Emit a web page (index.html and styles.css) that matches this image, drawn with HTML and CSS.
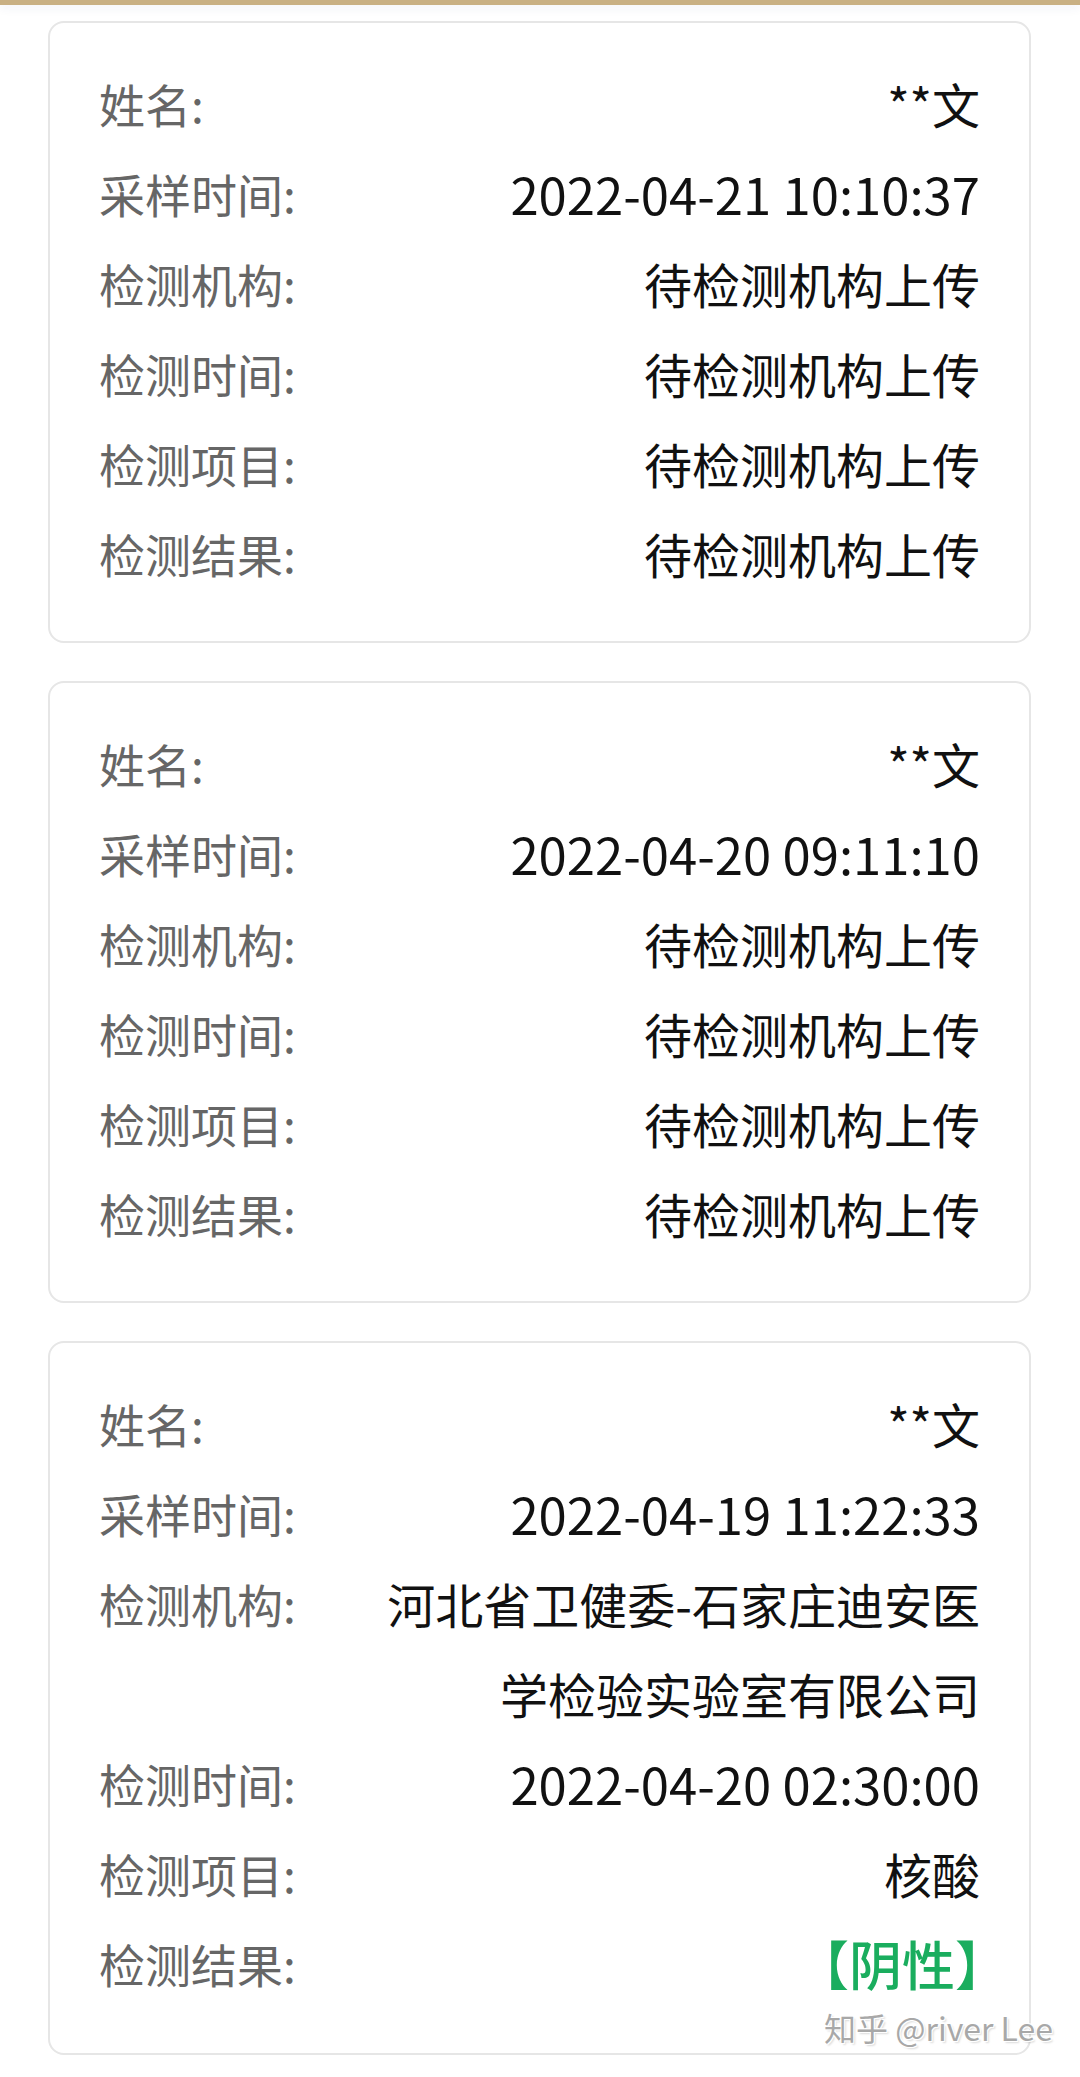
FILE: index.html
```html
<!DOCTYPE html>
<html lang="zh-CN">
<head>
<meta charset="utf-8">
<title>核酸检测记录</title>
<link rel="stylesheet" href="styles.css">
</head>
<body>
<div class="topbar"></div>
<main class="list">
  <section class="card">
    <div class="row"><span class="label">姓名:</span><span class="value">**文</span></div>
    <div class="row"><span class="label">采样时间:</span><span class="value num">2022-04-21 10:10:37</span></div>
    <div class="row"><span class="label">检测机构:</span><span class="value">待检测机构上传</span></div>
    <div class="row"><span class="label">检测时间:</span><span class="value">待检测机构上传</span></div>
    <div class="row"><span class="label">检测项目:</span><span class="value">待检测机构上传</span></div>
    <div class="row"><span class="label">检测结果:</span><span class="value">待检测机构上传</span></div>
  </section>
  <section class="card">
    <div class="row"><span class="label">姓名:</span><span class="value">**文</span></div>
    <div class="row"><span class="label">采样时间:</span><span class="value num">2022-04-20 09:11:10</span></div>
    <div class="row"><span class="label">检测机构:</span><span class="value">待检测机构上传</span></div>
    <div class="row"><span class="label">检测时间:</span><span class="value">待检测机构上传</span></div>
    <div class="row"><span class="label">检测项目:</span><span class="value">待检测机构上传</span></div>
    <div class="row"><span class="label">检测结果:</span><span class="value">待检测机构上传</span></div>
  </section>
  <section class="card">
    <div class="row"><span class="label">姓名:</span><span class="value">**文</span></div>
    <div class="row"><span class="label">采样时间:</span><span class="value num">2022-04-19 11:22:33</span></div>
    <div class="row"><span class="label">检测机构:</span><span class="value">河北省卫健委-石家庄迪安医学检验实验室有限公司</span></div>
    <div class="row"><span class="label">检测时间:</span><span class="value num">2022-04-20 02:30:00</span></div>
    <div class="row"><span class="label">检测项目:</span><span class="value">核酸</span></div>
    <div class="row"><span class="label">检测结果:</span><span class="value"><span class="negative">【阴性】</span></span></div>
  </section>
</main>
<div class="watermark">知乎 @river Lee</div>
</body>
</html>
```
FILE: styles.css
```css
html, body {
  margin: 0;
  padding: 0;
  background: #ffffff;
}
body {
  width: 1080px;
  min-height: 2077px;
  position: relative;
  font-family: "Noto Sans CJK SC", "Noto Sans", sans-serif;
  overflow: hidden;
}
.topbar {
  height: 5px;
  background: #c9b083;
  box-shadow: 0 3px 10px rgba(40, 70, 110, 0.08);
}
.list {
  display: flex;
  flex-direction: column;
  gap: 38px;
  padding: 16px 49px 0 48px;
}
.card {
  border: 2px solid #e6e6e6;
  border-radius: 16px;
  padding: 35px 49px 43px 49px;
  background: #fff;
}
.row {
  display: flex;
  align-items: flex-start;
  line-height: 90px;
}
.label {
  flex: 0 0 260px;
  font-size: 46px;
  color: #666666;
  white-space: nowrap;
}
.value {
  flex: 1 1 auto;
  min-width: 0;
  text-align: right;
  font-size: 48px;
  color: #111111;
}
.value.num {
  font-size: 50.8px;
}
.negative {
  display: inline-block;
  font-size: 53px;
  font-weight: 500;
  color: #1aad5e;
  margin-right: -28px;
}
.watermark {
  position: absolute;
  right: 27px;
  top: 2007px;
  font-size: 32px;
  line-height: 40px;
  color: #a8a8a8;
  font-family: "Noto Sans CJK SC", sans-serif;
  text-shadow: 1px 1px 0 #fff, -1px -1px 0 #fff, 1px -1px 0 #fff, -1px 1px 0 #fff, 2px 2px 2px rgba(0,0,0,0.15);
}
```
